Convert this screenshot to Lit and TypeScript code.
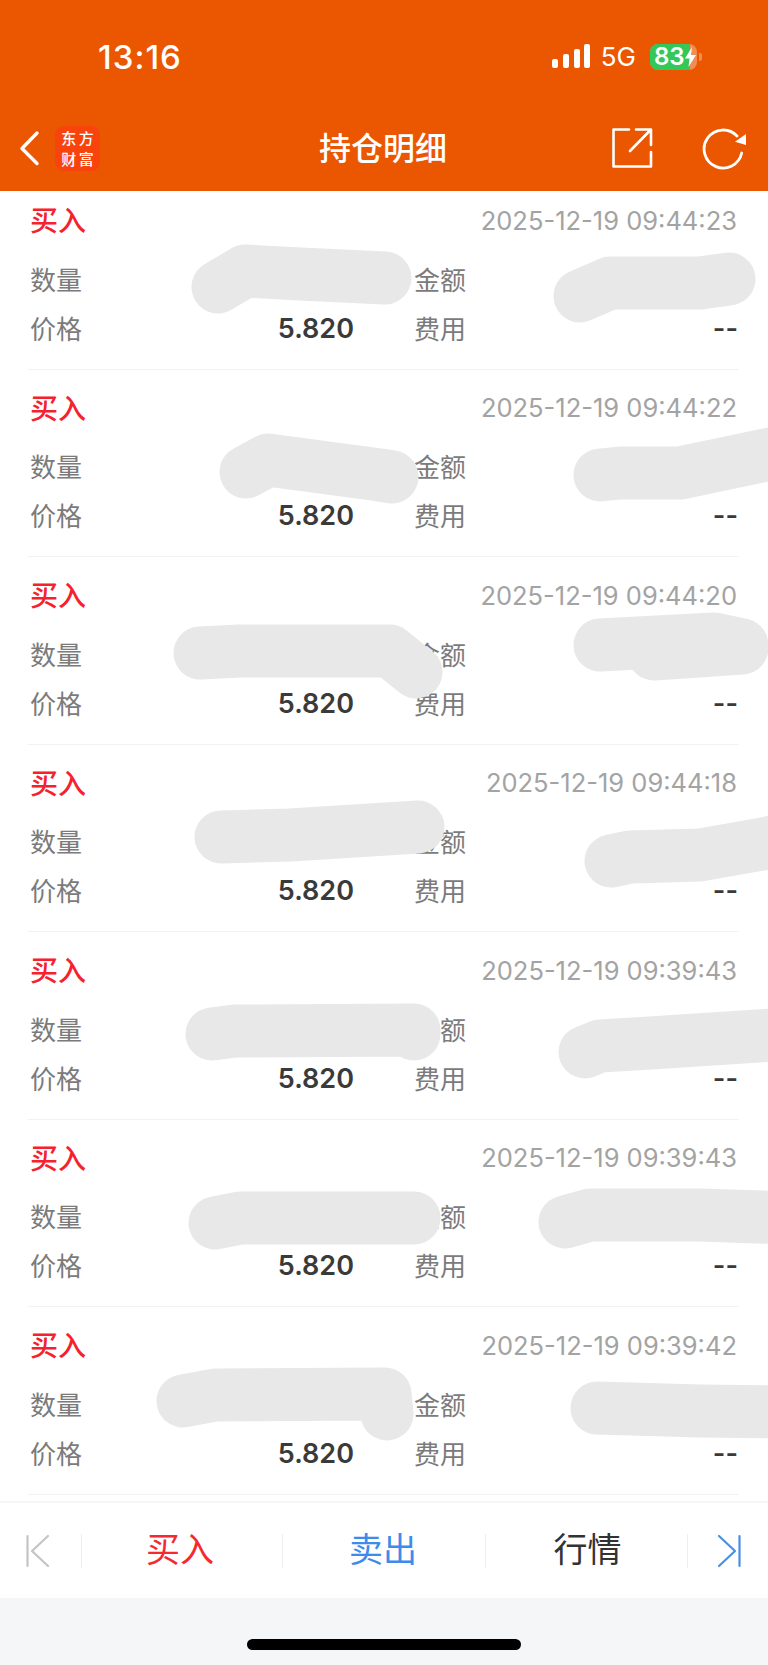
import { LitElement, html, css, svg } from "lit";
import { customElement } from "lit/decorators.js";

const TIMES = [
  "2025-12-19 09:44:23",
  "2025-12-19 09:44:22",
  "2025-12-19 09:44:20",
  "2025-12-19 09:44:18",
  "2025-12-19 09:39:43",
  "2025-12-19 09:39:43",
  "2025-12-19 09:39:42",
];

const SCRIBBLES = [
  "M218 287 L245 271 L300 274 L385 278",
  "M580 296 L610 283 L700 283 L729 279",
  "M246 472 L268 460 L380 475 L392 477",
  "M600 475 L620 473 L680 473 L790 450",
  "M200 653 L240 651 L390 651 L416 672",
  "M600 645 L714 639 L742 645 M654 654 L742 648",
  "M221 837 L290 835 L418 827",
  "M611 861 L630 857 L700 855 L768 843 L790 838",
  "M212 1034 L235 1031 L414 1030 L414 1034",
  "M585 1052 L600 1046 L650 1043 L790 1034",
  "M215 1223 L240 1218 L414 1218",
  "M565 1222 L590 1215 L700 1215 L790 1218",
  "M183 1401 L215 1395 L385 1394 L387 1414",
  "M597 1408 L700 1411 L790 1412",
];

@customElement("app-root")
export class AppRoot extends LitElement {
  static styles = css`
    :host {
      display: block;
      position: relative;
      width: 768px;
      height: 1665px;
      overflow: hidden;
      background: #fff;
      font-family: "Inter", "Noto Sans CJK SC", sans-serif;
    }
    .page {
      display: flex;
      flex-direction: column;
      height: 100%;
    }
    .head {
      background: #eb5600;
      color: #fff;
      height: 191px;
      box-sizing: border-box;
      flex: none;
    }
    .status {
      display: flex;
      align-items: center;
      justify-content: space-between;
      height: 40px;
      margin-top: 37px;
      padding: 0 66px 0 98px;
      margin-bottom: 37px;
    }
    .clock {
      font-size: 33px;
      font-weight: 500;
      line-height: 40px;
      letter-spacing: 1px;
    }
    .status-right {
      display: flex;
      align-items: center;
      gap: 13px;
    }
    .signal {
      display: block;
      width: 40px;
      height: 26px;
    }
    .net {
      font-size: 26px;
      line-height: 30px;
      margin: 0 1px 0 -3px;
    }
    .battery {
      position: relative;
      width: 47px;
      height: 26px;
      border-radius: 8px;
      background: rgba(255, 255, 255, 0.32);
      display: flex;
    }
    .battery-fill {
      width: 40px;
      height: 100%;
      border-radius: 8px 0 0 8px;
      background: #34c759;
    }
    .battery-text {
      position: absolute;
      left: 4px;
      top: 0;
      line-height: 26px;
      font-size: 24px;
      font-weight: 600;
    }
    .bolt {
      position: absolute;
      left: 35px;
      top: 3px;
      width: 11px;
      height: 20px;
    }
    .nub {
      width: 3px;
      height: 8px;
      border-radius: 0 2px 2px 0;
      background: rgba(255, 255, 255, 0.32);
      margin-left: -11px;
    }
    .nav {
      display: grid;
      grid-template-columns: 1fr auto 1fr;
      align-items: center;
      height: 68px;
    }
    .nav-left {
      display: flex;
      align-items: center;
      gap: 13px;
      padding-left: 16px;
    }
    .back {
      display: block;
      width: 26px;
      height: 40px;
    }
    .logo {
      width: 45px;
      height: 45px;
      border-radius: 9px;
      background: #f9430d;
      display: flex;
      flex-direction: column;
      align-items: center;
      justify-content: center;
      font-size: 15px;
      font-weight: 500;
      letter-spacing: 2.5px;
      font-family: "Noto Sans CJK SC", sans-serif;
    }
    .logo span {
      display: block;
      height: 21px;
      line-height: 21px;
      margin-right: -2.5px;
    }
    .title {
      font-size: 32px;
      font-weight: 500;
      line-height: 44px;
      padding: 0 2px 4px 0;
      white-space: nowrap;
      font-family: "Noto Sans CJK SC", sans-serif;
    }
    .nav-right {
      display: flex;
      align-items: center;
      justify-content: flex-end;
      gap: 47px;
      padding-right: 19px;
    }
    .nav-right svg {
      display: block;
    }
    .list {
      flex: 1;
      min-height: 0;
      padding: 0 29px 0 28px;
      overflow: hidden;
    }
    .row {
      box-sizing: border-box;
      height: 187.5px;
      padding: 14.5px 2px 0;
      border-bottom: 1px solid #f2f2f2;
    }
    .row:first-child {
      height: 178.5px;
      padding-top: 5.5px;
    }
    .row-top {
      display: flex;
      justify-content: space-between;
      align-items: center;
      height: 45px;
      margin-bottom: 12px;
    }
    .side {
      color: #f5222d;
      font-size: 28px;
      font-weight: 500;
      font-family: "Noto Sans CJK SC", sans-serif;
    }
    .time {
      color: #a3a3a3;
      font-size: 25.5px;
      margin-top: 2px;
    }
    .grid {
      display: grid;
      grid-template-columns: 323px 323px;
      column-gap: 61px;
      grid-auto-rows: 49px;
    }
    .cell {
      display: flex;
      justify-content: space-between;
      align-items: center;
    }
    .label {
      color: #7b7b7b;
      font-size: 26px;
      font-family: "Noto Sans CJK SC", sans-serif;
    }
    .value {
      color: #3a3a3a;
      font-size: 27px;
      font-weight: 600;
      margin: 2px -1px 0 0;
    }
    .toolbar {
      flex: none;
      height: 97px;
      box-sizing: border-box;
      border-top: 2px solid #f6f6f6;
      background: #fff;
      display: grid;
      grid-template-columns: 81px 201px 203px 202px 81px;
      align-items: center;
    }
    .tb {
      height: 34px;
      display: flex;
      align-items: center;
      justify-content: center;
      border-left: 1px solid #eeeeee;
      box-sizing: border-box;
    }
    .tb.first {
      border-left: none;
    }
    .tb svg {
      display: block;
    }
    .tb span {
      font-size: 34px;
      height: 34px;
      line-height: 34px;
      margin-top: -5px;
      font-family: "Noto Sans CJK SC", sans-serif;
    }
    .buy {
      color: #f5292f;
      margin-right: 4px;
    }
    .sell {
      color: #3d8bea;
      margin-right: 2px;
    }
    .quote {
      color: #333;
      margin-left: 2px;
    }
    .home {
      flex: none;
      height: 67px;
      background: #f5f6f8;
      display: flex;
      justify-content: center;
      padding-top: 41px;
      box-sizing: border-box;
    }
    .home-bar {
      width: 274px;
      height: 11px;
      border-radius: 6px;
      background: #000;
    }
    .scribble {
      position: absolute;
      inset: 0;
      width: 768px;
      height: 1665px;
      pointer-events: none;
    }
  `;

  render() {
    return html`
      <div class="page">
        <header class="head">
          <div class="status">
            <span class="clock">13:16</span>
            <div class="status-right">
              <svg class="signal" viewBox="0 0 40 26">
                <rect x="1" y="15" width="6" height="9" rx="2" fill="#fff" />
                <rect x="12" y="10" width="6" height="14" rx="2" fill="#fff" />
                <rect x="23" y="5" width="6" height="19" rx="2" fill="#fff" />
                <rect x="33" y="0" width="6" height="24" rx="2" fill="#fff" />
              </svg>
              <span class="net">5G</span>
              <div class="battery">
                <div class="battery-fill"></div>
                <span class="battery-text">83</span>
                <svg class="bolt" viewBox="0 0 11 20">
                  <path d="M7 0 L0 11.5 H4.5 L3.5 20 L11 8 H6 Z" fill="#fff" />
                </svg>
              </div>
              <div class="nub"></div>
            </div>
          </div>
          <nav class="nav">
            <div class="nav-left">
              <svg class="back" viewBox="16 128 26 40">
                <path d="M37 133 L22 148.5 L37 163.5" fill="none" stroke="#fff" stroke-width="3.4" stroke-linecap="round" stroke-linejoin="round" />
              </svg>
              <div class="logo"><span>东方</span><span>财富</span></div>
            </div>
            <div class="title">持仓明细</div>
            <div class="nav-right">
              <svg width="44" height="44" viewBox="610 126 44 44">
                <path d="M629 129.5 H613.5 V166.5 H651 V152" fill="none" stroke="#fff" stroke-width="2.6" stroke-linejoin="round" stroke-linecap="round" />
                <path d="M630 151 L650.5 130 M636 129.5 H651 V145" fill="none" stroke="#fff" stroke-width="2.6" stroke-linejoin="round" stroke-linecap="round" />
              </svg>
              <svg width="48" height="48" viewBox="701 124 48 48">
                <path d="M737 136 A19 19 0 1 0 741.7 153" fill="none" stroke="#fff" stroke-width="2.8" stroke-linecap="round" />
                <path d="M746 134 V145 L735 141.7 Z" fill="#fff" />
              </svg>
            </div>
          </nav>
        </header>
        <section class="list">
          ${TIMES.map(
            (t) => html`
              <div class="row">
                <div class="row-top">
                  <span class="side">买入</span>
                  <span class="time">${t}</span>
                </div>
                <div class="grid">
                  <div class="cell"><span class="label">数量</span></div>
                  <div class="cell"><span class="label">金额</span></div>
                  <div class="cell"><span class="label">价格</span><span class="value">5.820</span></div>
                  <div class="cell"><span class="label">费用</span><span class="value">--</span></div>
                </div>
              </div>
            `
          )}
        </section>
        <footer class="toolbar">
          <div class="tb first">
            <svg width="81" height="34" viewBox="0 1533 81 34">
              <path d="M27.5 1535 V1565 M48 1535 L32 1550 L48 1565" fill="none" stroke="#c4c4c4" stroke-width="2.2" stroke-linecap="round" stroke-linejoin="round" />
            </svg>
          </div>
          <div class="tb"><span class="buy">买入</span></div>
          <div class="tb"><span class="sell">卖出</span></div>
          <div class="tb"><span class="quote">行情</span></div>
          <div class="tb">
            <svg width="80" height="34" viewBox="688 1533 80 34">
              <path d="M739.5 1535 V1565 M719 1535 L735 1550 L719 1565" fill="none" stroke="#4a90e2" stroke-width="2.2" stroke-linecap="round" stroke-linejoin="round" />
            </svg>
          </div>
        </footer>
        <div class="home"><div class="home-bar"></div></div>
      </div>
      <svg class="scribble" viewBox="0 0 768 1665">
        ${SCRIBBLES.map(
          (d) => svg`<path d=${d} fill="none" stroke="#e8e8e8" stroke-width="53" stroke-linecap="round" stroke-linejoin="round" />`
        )}
      </svg>
    `;
  }
}
